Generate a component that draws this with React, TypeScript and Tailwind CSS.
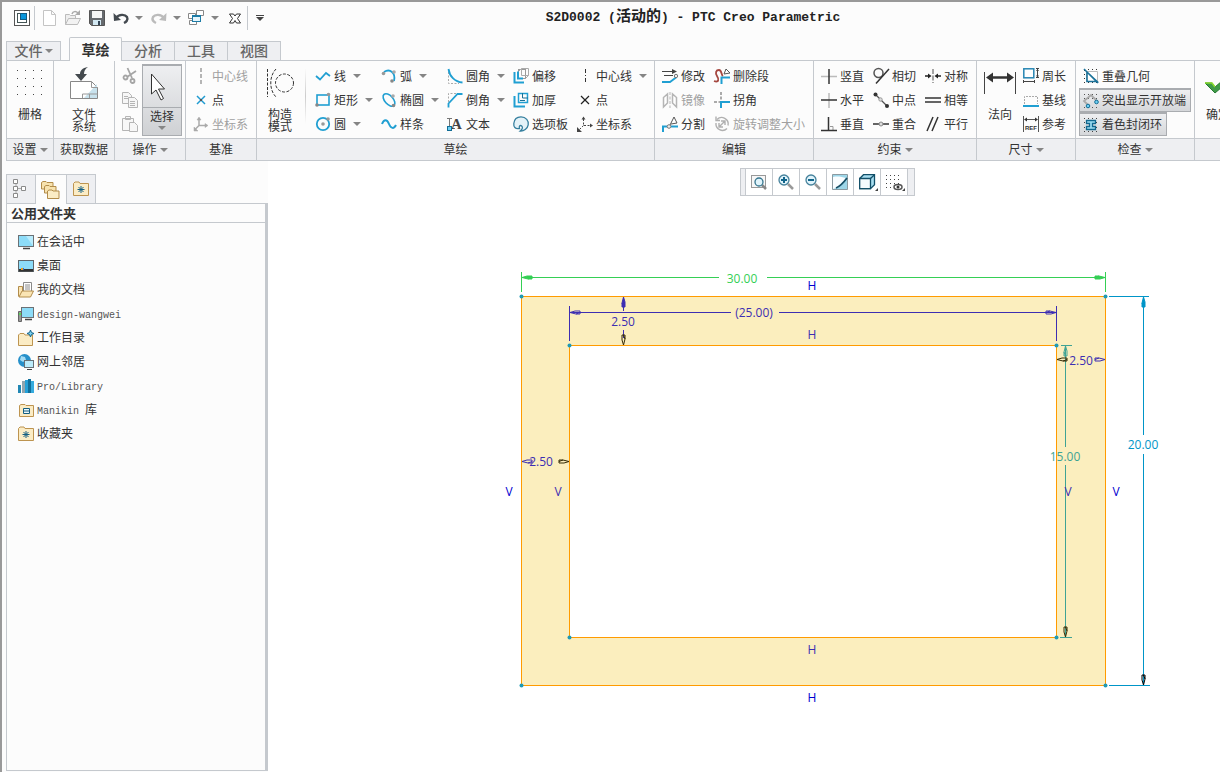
import type { ReactNode } from "react";

const ICONS: Record<string, ReactNode> = {
  app: (
    <>
      <rect x="0.5" y="0.5" width="15" height="15" fill="#fff" stroke="#555" />
      <rect x="3.5" y="3.5" width="9" height="9" fill="#fff" stroke="#455" />
      <rect x="6.5" y="3.5" width="6" height="6" fill="#0a96dc" stroke="#135c82" />
    </>
  ),
  newFile: <path d="M1.5.5h8l4 4v11h-12zM9.5.5v4h4" fill="#fff" stroke="#c4c4c4" />,
  open: (
    <>
      <path d="M.5 14.5v-10h4l1 1h5v3" fill="#eee" stroke="#bbb" />
      <path d="M.5 14.5l3-6h12l-3 6z" fill="#f2f2f2" stroke="#bbb" />
      <path d="M7 4c1-3 4-3 6-1" fill="none" stroke="#aaa" strokeWidth="1.5" />
      <path d="M15 0v5h-5z" fill="#aaa" />
    </>
  ),
  save: (
    <>
      <path d="M.5.5h15v15h-13l-2-2z" fill="#666a6e" stroke="#555" />
      <path d="M3 1h10v7H3z" fill="#f6f6f6" />
      <path d="M4 10h8v5H4z" fill="#d2e8f2" />
      <path d="M9 11h2v4H9z" fill="#345" />
    </>
  ),
  undo: (
    <>
      <path d="M3 8c3-4 9-4 11-1 1.500 3-1 5-3 6" fill="none" stroke="#444a50" strokeWidth="2.4" />
      <path d="M.5 3l.5 8 7-1z" fill="#444a50" />
    </>
  ),
  redo: (
    <>
      <path d="M13 8C10 4 4 4 2 7c-1.500 3 1 5 3 6" fill="none" stroke="#bbb" strokeWidth="2.4" />
      <path d="M15.5 3l-.5 8-7-1z" fill="#bbb" />
    </>
  ),
  windows: (
    <>
      <path d="M.5 3.500h7v5h-7zM1.500 10.500h7v4h-7zM8.500.5h7v5h-7z" fill="#fff" stroke="#888" />
      <rect x="4.500" y="5.500" width="8" height="6" fill="#e5f5fc" stroke="#1c7ba6" />
      <path d="M4 5h9v2H4z" fill="#1c7ba6" />
    </>
  ),
  close: <path d="M2.500 4h4l1.500 2 1.500-2h4l-3 4.500 3 4.500h-4l-1.500-2.500-1.500 2.500h-4l3-4.500z" fill="#fff" stroke="#333" />,
  cut: (
    <g fill="none" stroke="#a5a5a5" strokeWidth="1.8">
      <path d="M5.500 0l4.500 10M14 3L5 9" />
      <circle cx="3.500" cy="9.500" r="2" />
      <circle cx="10.500" cy="13" r="2" />
    </g>
  ),
  copy: (
    <g fill="#f7f7f7" stroke="#b5b5b5">
      <path d="M.5.5h6l3 3v8h-9zM2 4.500h4M2 6.500h4" />
      <path d="M6.500 5.500h6l3 3v7h-9zM8 9.500h5M8 11.500h5M8 13.500h5" />
    </g>
  ),
  paste: (
    <g fill="#f7f7f7" stroke="#b5b5b5">
      <path d="M.5 2.500h11v12H.5zM3.500.5h5v3h-5z" />
      <path d="M7.500 6.500h5l3 3v6h-8z" />
    </g>
  ),
  axisGray: <path d="M8 0v16" stroke="#b5b5b5" strokeWidth="2" strokeDasharray="4 2" fill="none" />,
  axis: <path d="M8.500 1v15" stroke="#333" strokeDasharray="4 2 1 2" fill="none" />,
  pointBlue: (
    <>
      <path d="M4 4l8 8M12 4l-8 8" stroke="#1f9bd1" strokeWidth="1.5" />
      <rect x="7" y="7" width="2" height="2" fill="#555" />
    </>
  ),
  point: (
    <>
      <path d="M4 4l8 8M12 4l-8 8" stroke="#222" strokeWidth="1.2" />
      <rect x="7" y="7" width="2" height="2" fill="#222" />
    </>
  ),
  csysGray: (
    <g stroke="#aaa" strokeWidth="1.5" fill="#aaa">
      <path d="M6 2v7.500h8M6 9.500l-4 4" fill="none" />
      <path d="M4 4L6 1l2 3zM12 7.500l3 2-3 2zM1 11v4h4z" strokeWidth=".5" />
    </g>
  ),
  csys: (
    <g stroke="#444" fill="#444">
      <path d="M6.500 3v6.500h7M6.500 9.500l-4 4" fill="none" strokeDasharray="2 1.500" />
      <path d="M4.500 3.500l2-3 2 3zM13 7.500l3 2-3 2zM0 11v5h5z" stroke="none" />
    </g>
  ),
  line: <path d="M1 8l4 3.500 6-6.500 4 3" fill="none" stroke="#209fd2" strokeWidth="1.800" />,
  rect: (
    <>
      <rect x="2" y="3" width="12" height="10" fill="none" stroke="#209fd2" strokeWidth="1.6" />
      <circle cx="13.500" cy="2.500" r="1.8" fill="#999" />
      <circle cx="2" cy="13" r="1.8" fill="#888" />
    </>
  ),
  circle: (
    <>
      <circle cx="8" cy="8" r="6.2" fill="none" stroke="#209fd2" strokeWidth="1.8" />
      <circle cx="8" cy="8" r="1.8" fill="#999" />
      <circle cx="13" cy="3" r="1.8" fill="#999" />
    </>
  ),
  arc: (
    <>
      <path d="M3 4c6-4 12 1 10 9" fill="none" stroke="#209fd2" strokeWidth="1.8" />
      <circle cx="2.500" cy="5.500" r="1.8" fill="#999" />
      <circle cx="13" cy="4" r="1.8" fill="#aaa" />
      <circle cx="11" cy="13" r="1.8" fill="#888" />
    </>
  ),
  ellipse: (
    <>
      <ellipse cx="8" cy="8" rx="7.500" ry="4.200" transform="rotate(48 8 8)" fill="none" stroke="#209fd2" strokeWidth="1.6" />
      <circle cx="12" cy="4" r="1.8" fill="#aaa" />
      <circle cx="12.500" cy="13.500" r="1.8" fill="#888" />
    </>
  ),
  spline: <path d="M1 8c2-5 5-5 7 0s5 5 7 1" fill="none" stroke="#209fd2" strokeWidth="2" />,
  fillet: (
    <>
      <path d="M1.500 4v11.500H12" fill="none" stroke="#aaa" strokeDasharray="2 1.500" />
      <path d="M1.500 1c1 7 6 13 14 13.500" fill="none" stroke="#209fd2" strokeWidth="1.8" />
    </>
  ),
  chamfer: (
    <>
      <path d="M1.500 10V1.500H9" fill="none" stroke="#aaa" strokeDasharray="2 1.500" />
      <path d="M1.500 15.500v-4l9-9.500h5" fill="none" stroke="#209fd2" strokeWidth="1.8" />
    </>
  ),
  text: (
    <>
      <path d="M2.500 2V11M0 2.500h5M4 12.500h4" fill="none" stroke="#777" />
      <text x="4" y="13" fontSize="15" fontWeight="700" fontFamily="Liberation Serif, serif" fill="#444">A</text>
      <rect x=".5" y="10.500" width="4" height="4" fill="#6fd0f3" stroke="#126d96" />
    </>
  ),
  offset: (
    <>
      <rect x="5.500" y="1.500" width="7" height="9" fill="none" stroke="#999" />
      <path d="M5.500 3.500l3-3h7v7l-3 3M8.500.5v7h7" fill="none" stroke="#aaa" />
      <path d="M1.500 4v10.500H11M5 3.500v7h5" fill="none" stroke="#209fd2" strokeWidth="2" />
    </>
  ),
  thicken: (
    <>
      <path d="M5.500 10.500V1.500h9v9z" fill="none" stroke="#209fd2" strokeWidth="1.5" />
      <path d="M1.500 4v10.500H12" fill="none" stroke="#209fd2" strokeWidth="2" />
      <path d="M9.500 1v5H15M7 8.500h5" fill="none" stroke="#1a6f95" />
    </>
  ),
  palette: (
    <path d="M8 .8c5 0 8 4 7.200 8-.7 4-4.500 6.500-8 6.200 2-1.500 3-3.500 1.500-5-1.700-1.400-3 .5-2.200 2.500C2 13.500.5 10.500.8 7.500 1.200 3.500 4 .8 8 .8z" fill="#e4f2f8" stroke="#357f9e" strokeWidth="1.3" />
  ),
  modify: (
    <>
      <path d="M0 3.500h12M2 7.500h9" stroke="#444" strokeWidth="1.2" fill="none" />
      <path d="M10 1l5 2.500-5 2.500z" fill="#444" />
      <path d="M0 14h8l6-4.500V6" fill="none" stroke="#209fd2" strokeWidth="1.8" />
      <circle cx="14" cy="8" r="1.7" fill="#eee" stroke="#777" />
    </>
  ),
  mirror: (
    <>
      <path d="M1.500 5.500l4-3.500v9l-4 4zM14.500 5.500l-4-3.500v9l4 4z" fill="#fff" stroke="#b5b5b5" strokeWidth="1.5" />
      <path d="M8 0v16" stroke="#b5b5b5" strokeDasharray="3 1.500" />
    </>
  ),
  divide: (
    <>
      <path d="M1 16v-5.500h4M9 10.500h7" fill="none" stroke="#209fd2" strokeWidth="2" />
      <path d="M8 9l4-8 3 6-6 1" fill="#fff" stroke="#555" />
      <circle cx="7" cy="10.500" r="1.8" fill="#eee" stroke="#777" />
    </>
  ),
  trim: (
    <>
      <path d="M0 13c5 2 5-2 3-5S2 2 5 2s2 5 4 6" fill="none" stroke="#a54740" strokeWidth="1.8" />
      <path d="M7.500 16V9.500H16" fill="none" stroke="#209fd2" strokeWidth="2" />
      <path d="M10 6l2-5 4 4z" fill="#fff" stroke="#555" />
    </>
  ),
  corner: (
    <>
      <path d="M7 0v8M0 10h6" fill="none" stroke="#aaa" strokeWidth="2" strokeDasharray="3 1.500" />
      <path d="M7 16v-6h9" fill="none" stroke="#209fd2" strokeWidth="2" />
    </>
  ),
  rotate: (
    <g fill="none" stroke="#b0b0b0" strokeWidth="1.4">
      <path d="M3 3.500a6.500 6.500 0 0 1 11 6M13 12.500A6.500 6.500 0 0 1 2 7" />
      <path d="M5.500 10.500l5-5M7 5h4v4M5 7v4h4M2 .5v4h4" />
    </g>
  ),
  vertical: (
    <>
      <path d="M0 8.500h16" stroke="#bbb" strokeWidth="1.5" />
      <path d="M8 1v15" stroke="#333" strokeWidth="1.5" />
    </>
  ),
  horizontal: (
    <>
      <path d="M8 1v15" stroke="#bbb" strokeWidth="1.5" />
      <path d="M0 8h16" stroke="#333" strokeWidth="1.5" />
    </>
  ),
  perpendicular: (
    <>
      <path d="M9 10.500h3v4" fill="none" stroke="#999" />
      <path d="M7.500 1v14M0 14.500h16" stroke="#333" strokeWidth="1.5" />
    </>
  ),
  tangent: (
    <>
      <circle cx="5.500" cy="5" r="4.500" fill="none" stroke="#555" strokeWidth="1.5" />
      <path d="M3 15.500L16 1" stroke="#333" strokeWidth="1.5" />
    </>
  ),
  midpoint: (
    <>
      <path d="M2 2l12 12" stroke="#555" strokeWidth="1.3" />
      <circle cx="2.500" cy="2.500" r="2" fill="#333" />
      <circle cx="14" cy="14" r="2" fill="#333" />
      <circle cx="7.500" cy="7.500" r="1.7" fill="#ddd" stroke="#999" />
    </>
  ),
  coincident: (
    <>
      <path d="M0 8h16" stroke="#333" strokeWidth="1.5" />
      <circle cx="8" cy="8" r="2" fill="#ddd" stroke="#888" />
    </>
  ),
  symmetric: (
    <>
      <path d="M8 1v14" stroke="#888" strokeWidth="1.5" strokeDasharray="5 1.500" />
      <path d="M0 8h5M16 8h-5" stroke="#222" strokeWidth="1.5" />
      <path d="M3 5.500L6.500 8 3 10.500zM13 5.500L9.500 8l3.500 2.500z" fill="#222" />
    </>
  ),
  equal: <path d="M0 6h16M0 10h16" stroke="#333" strokeWidth="1.5" />,
  parallel: <path d="M2 15L8 1M7 15l6-14" stroke="#333" strokeWidth="1.5" />,
  perimeter: (
    <>
      <rect x=".8" y=".8" width="10" height="9" fill="#fff" stroke="#2786b3" strokeWidth="1.5" />
      <path d="M14.500 1v8M13 .5h3M13 9.500h3M1 13.500h10M.5 12v3M11.500 12v3" stroke="#444" />
      <path d="M13 3l1.500-2L16 3zM13 7.500l1.500 2 1.500-2z" fill="#444" />
    </>
  ),
  baseline: (
    <>
      <path d="M1.500 12V4.500h13V12" fill="none" stroke="#aaa" strokeDasharray="2 1" />
      <path d="M0 14h16" stroke="#209fd2" strokeWidth="2" />
    </>
  ),
  reference: (
    <>
      <path d="M.5 0v16M15.500 0v16M2 3.500h12" stroke="#555" />
      <path d="M1 3.500l3-2v4zM15 3.500l-3-2v4z" fill="#333" />
      <text x="2" y="14" fontSize="6" fontWeight="700" fontFamily="Liberation Sans, sans-serif" fill="#333">REF</text>
    </>
  ),
  overlap: (
    <>
      <path d="M1 1.500h13M1 14.500h13M1.500 2v13" stroke="#333" strokeDasharray="1 3" />
      <path d="M3.500 3.500h11v10h-11z" fill="#fff" stroke="#bbb" />
      <path d="M4 4v9.500h10zM1 1l14 14" fill="none" stroke="#1b7299" strokeWidth="1.6" />
    </>
  ),
  openEnds: (
    <>
      <path d="M1 1.500h15M1 5.500h15M1 14.500h15" stroke="#555" strokeDasharray="1 3" />
      <path d="M5 12L1 8l7-6 6 6" fill="none" stroke="#aaa" strokeWidth="1.8" />
      <circle cx="5" cy="13" r="1.8" fill="#6fd0f3" stroke="#126d96" />
      <circle cx="13.500" cy="9" r="1.8" fill="#6fd0f3" stroke="#126d96" />
    </>
  ),
  shade: (
    <>
      <path d="M1 1.500h15M1 5.500h15M1 10.500h15M1 14.500h15" stroke="#444" strokeDasharray="1 3" />
      <path d="M3.500 3.500h9v3h-3v3h3v3h-9v-3h3v-3h-3z" fill="#9bdcf2" stroke="#12688f" strokeWidth="1.3" />
    </>
  ),
  tree: (
    <>
      <path d="M3 3v12M3 7.500h6" stroke="#aaa" />
      <path d="M.5-1.500h4v4h-4zM.5 5.500h4v4h-4zM.5 12.500h4v4h-4zM8.500 5.500h4v4h-4z" fill="#fff" stroke="#8a8a8a" />
    </>
  ),
  folders: (
    <g fill="#f7e2ae" stroke="#b28c4a">
      <path d="M-1.500 7V.5L0-.5h3l1 1h6V7z" />
      <path d="M1.500 11V4.500L3 3.500h3l1 1h6V11z" />
      <path d="M4.500 16.500V9L6 8h3l1 1h6v7.500z" fill="#fbecc5" />
    </g>
  ),
  favFolder: (
    <>
      <path d="M.5 14.500V2.500L2 1h4l1 1.500h8.500v12z" fill="#fbecc5" stroke="#bd9450" />
      <path d="M8 5v7M4.500 8.500h7M5.500 6l5 5M10.500 6l-5 5" stroke="#135f83" />
    </>
  ),
  session: (
    <>
      <rect x=".5" y="1.500" width="15" height="11" fill="#8ddcf8" stroke="#6b7175" />
      <path d="M5 14.500h7" stroke="#444" strokeWidth="1.5" />
      <path d="M15 2v10L8 2z" fill="#b9ecfd" />
    </>
  ),
  desktop: (
    <>
      <rect x=".5" y="2.500" width="15" height="11" fill="#8ddcf8" stroke="#5f666a" />
      <path d="M1 11h14v2.500H1z" fill="#333" />
      <path d="M3 10h2v2H3z" fill="#f0a21a" />
      <path d="M5 10h1v2H5z" fill="#2670dd" />
    </>
  ),
  documents: (
    <>
      <path d="M.5 14.500v-10h4v10" fill="#fae5b4" stroke="#b28c4a" />
      <path d="M5.500 10V.5h8V10M7 3h5M7 5h5M7 7h5" fill="#fff" stroke="#8a8a8a" />
      <path d="M1 15l3-6h11.500l-3 6z" fill="#fae5b4" stroke="#b28c4a" />
    </>
  ),
  computer: (
    <>
      <rect x="3.500" y="1.500" width="12" height="10" fill="#8ddcf8" stroke="#6b7175" />
      <path d="M7 13.500h7" stroke="#444" strokeWidth="1.5" />
      <path d="M.5 5.500h3v10h-3z" fill="#999" stroke="#666" />
      <path d="M1 7h2v2H1z" fill="#57d957" />
    </>
  ),
  workDir: (
    <>
      <path d="M.5 15.500V5L2 3.500h4L7 5h7.500v10.500z" fill="#fbecc5" stroke="#bd9450" />
      <path d="M12.500 0l1 2.500 2.500 1-2.500 1-1 2.500-1-2.500-2.500-1 2.500-1z" fill="#76cff0" stroke="#15658b" />
    </>
  ),
  network: (
    <>
      <circle cx="6.500" cy="6.500" r="6.500" fill="#2690ca" />
      <path d="M3 2l4 1 1 3-3 2-3-2zM7 8l3 1-2 3z" fill="#a5dcf3" />
      <rect x="6.500" y="6.500" width="9" height="7" fill="#bcecfb" stroke="#687177" />
      <path d="M9 15.500h5" stroke="#444" />
    </>
  ),
  library: (
    <>
      <path d="M0 7h3v8H0z" fill="#2187b4" />
      <path d="M4 3h3v12H4z" fill="#8fa5af" />
      <path d="M7 2h3v13H7z" fill="#25a0d7" />
      <path d="M10 1h3v14h-3z" fill="#126f9a" />
      <path d="M13 3h3v12h-3z" fill="#36abde" />
    </>
  ),
  manikin: (
    <>
      <path d="M1.500 14.500v-11L3 2.500h4l1 1h7.500v11z" fill="#fbecc5" stroke="#bd9450" />
      <path d="M5.500 6.500h6v5h-6zM5 9h7" fill="#eaf7fc" stroke="#135f83" />
    </>
  ),
  refit: (
    <>
      <rect x=".5" y="1.500" width="14" height="12" fill="#f7f7f7" stroke="#999" />
      <path d="M11 11l4 4" stroke="#888" strokeWidth="2.5" />
      <circle cx="8" cy="8" r="4" fill="#e1f4fb" stroke="#34758e" strokeWidth="1.3" />
    </>
  ),
  zoomIn: (
    <>
      <path d="M10 10l5 5" stroke="#999" strokeWidth="2.5" />
      <circle cx="6" cy="6" r="5" fill="#dff3fb" stroke="#46829c" strokeWidth="1.3" />
      <path d="M3 6h6M6 3v6" stroke="#11658b" strokeWidth="2" />
    </>
  ),
  zoomOut: (
    <>
      <path d="M10 10l5 5" stroke="#999" strokeWidth="2.5" />
      <circle cx="6" cy="6" r="5" fill="#dff3fb" stroke="#46829c" strokeWidth="1.3" />
      <path d="M3 6h6" stroke="#11658b" strokeWidth="2" />
    </>
  ),
  repaint: (
    <>
      <path d="M.5.5h15v15H.5z" fill="#9dd6e8" stroke="#8b9aa1" />
      <path d="M1 3c5-1 9 0 13 1l-7 9-6 2z" fill="#f9fdff" />
      <path d="M4 14c5-2 8-6 11-10" stroke="#174f66" strokeWidth="1.8" fill="none" />
    </>
  ),
  box: (
    <>
      <path d="M.7 4.500L4.500.7h11v10l-4 4H.7z" fill="#a8def0" stroke="#124f68" strokeWidth="1.3" />
      <path d="M.7 4.500h10.800v10.200H.7z" fill="#f4fbfe" stroke="#124f68" strokeWidth="1.3" />
      <path d="M11.500 4.500l4-3.800" stroke="#124f68" strokeWidth="1.3" />
    </>
  ),
  displayFilter: (
    <>
      <path d="M0 1.500h14M0 5.500h14M0 9.500h14M0 13.500h6" stroke="#444" strokeDasharray="1 3" />
      <ellipse cx="12" cy="13" rx="4" ry="2.500" fill="#fff" stroke="#555" strokeWidth="1.5" />
      <circle cx="12" cy="13" r="1.500" fill="#333" />
    </>
  ),
};

function Icon({ name, size = 16 }: { name: string; size?: number }) {
  return (
    <svg width={size} height={size} viewBox="0 0 16 16" className="shrink-0 overflow-visible" aria-hidden>
      {ICONS[name]}
    </svg>
  );
}

function Caret({ dark }: { dark?: boolean }) {
  return (
    <svg width="8" height="4" viewBox="0 0 8 4" className="shrink-0" aria-hidden>
      <path d="M0 0h8L4 4z" fill={dark ? "#444" : "#858585"} />
    </svg>
  );
}

interface ToolProps {
  icon: string;
  label: string;
  menu?: boolean;
  disabled?: boolean;
}

function Tool({ icon, label, menu, disabled }: ToolProps) {
  return (
    <button
      type="button"
      disabled={disabled}
      className={`flex h-6 items-center gap-[3px] whitespace-nowrap ${disabled ? "text-[#a0a0a0]" : "text-[#333]"}`}
    >
      <Icon name={icon} />
      <span className="pt-px">{label}</span>
      {menu && (
        <span className="ml-1">
          <Caret />
        </span>
      )}
    </button>
  );
}

interface GroupProps {
  title: string;
  menu?: boolean;
  width: string;
  children: ReactNode;
}

function Group({ title, menu, width, children }: GroupProps) {
  return (
    <section aria-label={title} className={`flex flex-col border-l border-[#c5c9ce] ${width}`}>
      <div className="flex h-[77px] overflow-hidden pt-[3px]">{children}</div>
      <div className="flex h-[22px] items-center justify-center gap-[3px] border-t border-[#c5c9ce] bg-[#eeeff2] whitespace-nowrap">
        {title}
        {menu && <Caret />}
      </div>
    </section>
  );
}

const SKETCH: ToolProps[][] = [
  [
    { icon: "line", label: "线", menu: true },
    { icon: "rect", label: "矩形", menu: true },
    { icon: "circle", label: "圆", menu: true },
  ],
  [
    { icon: "arc", label: "弧", menu: true },
    { icon: "ellipse", label: "椭圆", menu: true },
    { icon: "spline", label: "样条" },
  ],
  [
    { icon: "fillet", label: "圆角", menu: true },
    { icon: "chamfer", label: "倒角", menu: true },
    { icon: "text", label: "文本" },
  ],
  [
    { icon: "offset", label: "偏移" },
    { icon: "thicken", label: "加厚" },
    { icon: "palette", label: "选项板" },
  ],
];

const SKETCH_DATUM: ToolProps[] = [
  { icon: "axis", label: "中心线", menu: true },
  { icon: "point", label: "点" },
  { icon: "csys", label: "坐标系" },
];

const EDIT: ToolProps[][] = [
  [
    { icon: "modify", label: "修改" },
    { icon: "mirror", label: "镜像", disabled: true },
    { icon: "divide", label: "分割" },
  ],
  [
    { icon: "trim", label: "删除段" },
    { icon: "corner", label: "拐角" },
    { icon: "rotate", label: "旋转调整大小", disabled: true },
  ],
];

const CONSTRAIN: ToolProps[][] = [
  [
    { icon: "vertical", label: "竖直" },
    { icon: "horizontal", label: "水平" },
    { icon: "perpendicular", label: "垂直" },
  ],
  [
    { icon: "tangent", label: "相切" },
    { icon: "midpoint", label: "中点" },
    { icon: "coincident", label: "重合" },
  ],
  [
    { icon: "symmetric", label: "对称" },
    { icon: "equal", label: "相等" },
    { icon: "parallel", label: "平行" },
  ],
];

function Column({ tools, width = "" }: { tools: ToolProps[]; width?: string }) {
  return (
    <div className={`flex shrink-0 flex-col items-start ${width}`}>
      {tools.map((t) => (
        <Tool key={t.label} {...t} />
      ))}
    </div>
  );
}

function Divider() {
  return <span className="h-6 w-px bg-[#c5c9ce]" />;
}

function TitleBar() {
  return (
    <header className="flex h-[35px] items-center pb-[3px]">
      <div className="flex h-8 items-center pl-3">
        <button type="button" aria-label="应用程序"><Icon name="app" /></button>
        <span className="mr-[7px] ml-1 flex"><Divider /></span>
        <button type="button" aria-label="新建" className="mr-[7px]"><Icon name="newFile" /></button>
        <button type="button" aria-label="打开" className="mr-2"><Icon name="open" /></button>
        <button type="button" aria-label="保存" className="mr-2"><Icon name="save" /></button>
        <button type="button" aria-label="撤消" className="mr-2 flex items-center gap-1.5"><Icon name="undo" /><Caret /></button>
        <button type="button" aria-label="重做" className="mr-[7px] flex items-center gap-1.5"><Icon name="redo" /><Caret /></button>
        <button type="button" aria-label="窗口" className="mr-2 flex items-center gap-[7px]"><Icon name="windows" /><Caret /></button>
        <button type="button" aria-label="关闭"><Icon name="close" /></button>
        <span className="mr-2 ml-1 flex"><Divider /></span>
        <button type="button" aria-label="自定义" className="flex flex-col items-center gap-px">
          <span className="h-px w-2 bg-[#444]" />
          <Caret dark />
        </button>
      </div>
      <h1 className="flex-1 pr-[98px] text-center font-['Liberation_Mono','Noto_Sans_CJK_SC',monospace] text-[13px] leading-5 font-bold whitespace-nowrap text-[#222]">
        S2D0002 (<span className="text-[15px]">活动的</span>) - PTC Creo Parametric
      </h1>
    </header>
  );
}

function RibbonTabs() {
  return (
    <nav className="ml-1 flex h-[23px] items-end text-sm font-medium text-[#666]">
      <button type="button" className="flex h-[19px] w-[55px] items-center justify-center gap-0.5 border border-b-0 border-[#c5c9ce] bg-[#eeeff2]">
        文件
        <Caret />
      </button>
      <button type="button" className="relative -mb-px ml-2 flex h-6 w-[53px] items-center justify-center rounded-t-xs border border-b-0 border-[#c5c9ce] bg-[#fcfcfc] font-bold text-[#333]">
        草绘
      </button>
      {["分析", "工具", "视图"].map((t) => (
        <button key={t} type="button" className="flex h-[19px] w-[53px] items-center justify-center border-t border-r border-[#c5c9ce] bg-[#eeeff2]">
          {t}
        </button>
      ))}
    </nav>
  );
}

function BigTool({ label, width, children }: { label: string; width: string; children: ReactNode }) {
  return (
    <button type="button" className={`flex shrink-0 flex-col items-center justify-start ${width}`}>
      <span className="flex h-[38px] items-center justify-center">{children}</span>
      <span className="pt-[7px] leading-3 whitespace-pre-line">{label}</span>
    </button>
  );
}

function Ribbon() {
  return (
    <div className="ml-1 flex overflow-hidden border-y border-[#c5c9ce] bg-[#fcfcfc] text-xs text-[#333]">
      <Group title="设置" menu width="w-[47px] shrink-0">
        <BigTool label="栅格" width="w-full">
          <svg width="28" height="28" viewBox="0 0 28 28" aria-hidden>
            <path d="M1 1.500h26M1 9.500h26M1 17.500h26M1 25.500h26" stroke="#444" strokeDasharray="1 7" />
          </svg>
        </BigTool>
      </Group>
      <Group title="获取数据" width="w-[61px] shrink-0">
        <BigTool label={"文件\n系统"} width="w-full">
          <svg width="28" height="34" viewBox="0 0 28 34" aria-hidden>
            <path d="M.5 15.500h21l6 6v11H.5z" fill="#fff" stroke="#888" />
            <path d="M14 32l13-14v14z" fill="#c8e2ed" />
            <path d="M21.500 15.500v6h6M12.500 32v-4h15M19.500 28v4" fill="none" stroke="#999" />
            <path d="M18 1c-6 1-8 4-8 7H5l6 7 6-7h-3c0-3 1-5 4-7z" fill="#444a4e" />
          </svg>
        </BigTool>
      </Group>
      <Group title="操作" menu width="w-[71px] shrink-0">
        <div className="flex w-[27px] flex-col pl-[7px]">
          {[
            { name: "cut", label: "剪切" },
            { name: "copy", label: "复制" },
            { name: "paste", label: "粘贴" },
          ].map((b) => (
            <button key={b.name} type="button" disabled aria-label={b.label} className="flex h-6 items-center">
              <Icon name={b.name} />
            </button>
          ))}
        </div>
        <button type="button" className="flex h-[72px] w-10 flex-col items-center border border-t-2 border-[#a9acb0] bg-gradient-to-b from-[#eeeff1] to-[#cfd1d4]">
          <span className="flex h-[42px] w-full items-center justify-center border-b border-[#a9acb0]">
            <svg width="16" height="28" viewBox="0 0 16 28" className="mr-2" aria-hidden>
              <path d="M1.500 1v20l4.500-4 5 10 2.500-1.500-5-9.500h6z" fill="#fff" stroke="#333" />
            </svg>
          </span>
          <span className="leading-[18px]">选择</span>
          <Caret />
        </button>
      </Group>
      <Group title="基准" width="w-[71px] shrink-0">
        <div className="pl-[7px]">
          <Column
            tools={[
              { icon: "axisGray", label: "中心线", disabled: true },
              { icon: "pointBlue", label: "点" },
              { icon: "csysGray", label: "坐标系", disabled: true },
            ]}
          />
        </div>
      </Group>
      <Group title="草绘" width="w-[398px] shrink-0">
        <BigTool label={"构造\n模式"} width="w-[46px]">
          <svg width="28" height="30" viewBox="0 0 28 30" aria-hidden>
            <g fill="none" stroke="#333" strokeDasharray="3 1.500">
              <path d="M1.500 1v28M10 1C3 8 3 22 10 29" />
              <circle cx="18.500" cy="15" r="9" />
            </g>
          </svg>
        </BigTool>
        <span className="mt-1 mr-[9px] ml-0.5 h-14 w-px bg-gradient-to-b from-transparent via-[#ccc] to-transparent" />
        {SKETCH.map((col, i) => (
          <Column key={i} tools={col} width={i === 3 ? "w-16" : "w-[66px]"} />
        ))}
        <Column tools={SKETCH_DATUM} />
      </Group>
      <Group title="编辑" width="w-[159px] shrink-0">
        <div className="flex pl-[7px]">
          <Column tools={EDIT[0]} width="w-[52px]" />
          <Column tools={EDIT[1]} />
        </div>
      </Group>
      <Group title="约束" menu width="w-[163px] shrink-0">
        <div className="flex pl-[7px]">
          {CONSTRAIN.map((col, i) => (
            <Column key={i} tools={col} width="w-[52px]" />
          ))}
        </div>
      </Group>
      <Group title="尺寸" menu width="w-[99px] shrink-0">
        <BigTool label="法向" width="w-[46px]">
          <svg width="32" height="24" viewBox="0 0 32 24" aria-hidden>
            <path d="M.5 1v22M31.500 1v22" stroke="#444" />
            <path d="M6 6.500h20" stroke="#333" strokeWidth="2.500" />
            <path d="M2 6.500l7-5v10zM30 6.500l-7-5v10z" fill="#333" />
          </svg>
        </BigTool>
        <Column
          tools={[
            { icon: "perimeter", label: "周长" },
            { icon: "baseline", label: "基线" },
            { icon: "reference", label: "参考" },
          ]}
        />
      </Group>
      <Group title="检查" menu width="w-[119px] shrink-0">
        <div className="flex flex-col items-start pl-[3px]">
          <span className="pl-1">
            <Tool icon="overlap" label="重叠几何" />
          </span>
          {[
            { icon: "openEnds", label: "突出显示开放端" },
            { icon: "shade", label: "着色封闭环" },
          ].map((t) => (
            <span key={t.label} className="flex h-6 items-center border border-t-2 border-[#a9acb0] bg-gradient-to-b from-[#eeeff1] to-[#d5d7da] pr-1 pl-[3px]">
              <Tool {...t} />
            </span>
          ))}
        </div>
      </Group>
      <Group title="" width="min-w-[60px] flex-1">
        <button type="button" className="flex shrink-0 flex-col items-start pl-[9px]">
          <span className="flex h-[45px] items-center">
            <svg width="26" height="14" viewBox="0 0 26 14" aria-hidden>
              <path d="M1 3h7l3 4 7-6h7L11 13z" fill="#3f9a47" stroke="#267a32" />
              <path d="M1 3h7l3 4" fill="none" stroke="#8bdc2e" strokeWidth="1.5" />
            </svg>
          </span>
          <span className="pl-0.5 leading-3">确定</span>
        </button>
      </Group>
    </div>
  );
}

const FOLDERS = [
  { icon: "session", label: "在会话中" },
  { icon: "desktop", label: "桌面" },
  { icon: "documents", label: "我的文档" },
  { icon: "computer", label: "design-wangwei" },
  { icon: "workDir", label: "工作目录" },
  { icon: "network", label: "网上邻居" },
  { icon: "library", label: "Pro/Library" },
  { icon: "manikin", label: "Manikin 库" },
  { icon: "favFolder", label: "收藏夹" },
];

function FolderLabel({ label }: { label: string }) {
  // latin runs use a mono face so that they keep half-width cells
  const [, latin, rest] = label.match(/^([\x20-\x7e]*)(.*)$/) ?? ["", "", label];
  return (
    <span className="whitespace-pre">
      {latin && <span className="font-['Liberation_Mono',monospace] text-[10px] text-[#555]">{latin}</span>}
      {rest}
    </span>
  );
}

function Sidebar() {
  return (
    <aside className="flex w-[266px] shrink-0 flex-col bg-[#fcfcfc] pb-px pl-1">
      <div className="flex h-[42px] items-end">
        {["tree", "folders", "favFolder"].map((name, i) => (
          <button
            key={name}
            type="button"
            aria-label={["模型树", "文件夹浏览器", "收藏夹"][i]}
            className={`flex w-[30px] items-center justify-center border border-b-0 border-[#c5c9ce] ${
              i === 1 ? "relative -mb-px h-[30px] border-x-0 bg-[#fcfcfc]" : "h-[29px] bg-[#eeeff2]"
            }`}
          >
            <Icon name={name} />
          </button>
        ))}
      </div>
      <div className="flex-1 border border-r-[3px] border-[#c5c9ce] text-xs text-[#333]">
        <h2 className="flex h-[19px] items-center border-b border-[#c5c9ce] pt-0.5 pl-1 text-[13px] font-bold">公用文件夹</h2>
        <ul className="pt-[7px] pl-[11px]">
          {FOLDERS.map((f) => (
            <li key={f.label}>
              <button type="button" className="flex h-6 items-center gap-[3px]">
                <Icon name={f.icon} />
                <FolderLabel label={f.label} />
              </button>
            </li>
          ))}
        </ul>
      </div>
    </aside>
  );
}

const VIEW_TOOLS = [
  { name: "refit", label: "重新调整" },
  { name: "zoomIn", label: "放大" },
  { name: "zoomOut", label: "缩小" },
  { name: "repaint", label: "重画" },
  { name: "box", label: "显示样式", more: true },
  { name: "displayFilter", label: "草绘器显示过滤器", more: true },
];

function ViewToolbar() {
  return (
    <div className="flex h-7 w-[175px] border border-[#c5c9ce] bg-[#eeeff2]">
      <span className="w-1 shrink-0" />
      {VIEW_TOOLS.map((t) => (
        <button
          key={t.name}
          type="button"
          aria-label={t.label}
          className="flex w-[27px] shrink-0 items-center justify-center border-l border-[#c5c9ce] bg-white"
        >
          <Icon name={t.name} />
          {t.more && (
            <svg width="3" height="3" viewBox="0 0 3 3" className="-mr-[3px] mb-1 self-end" aria-hidden>
              <path d="M3 0v3H0z" fill="#444" />
            </svg>
          )}
        </button>
      ))}
      <span className="flex-1 border-l border-[#c5c9ce]" />
    </div>
  );
}

const GREEN = "#35cf55";
const PURPLE = "#3d2eb2";
const TEAL = "#3fa394";
const CYAN = "#0095c8";
const DARK = "#352a05";
const BLUE = "#0000d0";

// tip of the arrow is at x, y; angle 0 points left
function Arrow({ x, y, angle, color, filled }: { x: number; y: number; angle: number; color: string; filled?: boolean }) {
  return (
    <path
      d="M0 0L5-1.500H10V1.500H6zM6 1.500L10 0"
      transform={`translate(${x} ${y}) rotate(${angle})`}
      fill={filled ? color : "none"}
      stroke={color}
    />
  );
}

const LINES = [
  { color: GREEN, d: "M521.5 272v20M1105.5 272v20M522 277.5H719M767 277.5H1105" },
  { color: PURPLE, d: "M569.5 306v35M1056.5 306v35M570 312.5H731M779 312.5H1056M623.5 297v14M623.5 330v8" },
  { color: TEAL, d: "M1065.5 346V447M1065.5 465V637M1061 345.5h11M1060 637.5h12" },
  { color: CYAN, d: "M1143.5 297V435M1143.5 454V685M1109 296.5h40M1109 685.5h41" },
];

const DIMS = [
  { x: 742, y: 283, t: "30.00", c: GREEN },
  { x: 754, y: 317, t: "(25.00)", c: PURPLE },
  { x: 623, y: 326, t: "2.50", c: PURPLE },
  { x: 1081, y: 365, t: "2.50", c: PURPLE },
  { x: 541, y: 466, t: "2.50", c: PURPLE },
  { x: 1065, y: 461, t: "15.00", c: TEAL },
  { x: 1143, y: 449, t: "20.00", c: CYAN },
  { x: 812, y: 290, t: "H", c: BLUE },
  { x: 812, y: 339, t: "H", c: PURPLE },
  { x: 812, y: 654, t: "H", c: PURPLE },
  { x: 812, y: 702, t: "H", c: BLUE },
  { x: 509, y: 496, t: "V", c: BLUE },
  { x: 558, y: 496, t: "V", c: PURPLE },
  { x: 1068, y: 496, t: "V", c: PURPLE },
  { x: 1116, y: 496, t: "V", c: BLUE },
];

const VERTICES = [
  [521, 296],
  [1105, 296],
  [521, 685],
  [1105, 685],
  [569, 345],
  [1056, 345],
  [569, 637],
  [1056, 637],
];

function SketchView() {
  return (
    <svg width="952" height="570" viewBox="268 196 952 570" className="shrink-0" role="img" aria-label="草绘">
      <path d="M521.5 296.5H1105.5V685.5H521.5zM569.5 345.5V637.5H1056.5V345.5z" fill="#fbeebe" stroke="#ff9b00" />
      {LINES.map((l) => (
        <path key={l.color} d={l.d} fill="none" stroke={l.color} />
      ))}
      <Arrow x={522} y={277.5} angle={0} color={GREEN} filled />
      <Arrow x={1105} y={277.5} angle={180} color={GREEN} filled />
      <Arrow x={570} y={312.5} angle={0} color={PURPLE} />
      <Arrow x={1056} y={312.5} angle={180} color={PURPLE} />
      <Arrow x={623.5} y={297} angle={90} color={PURPLE} filled />
      <Arrow x={623.5} y={345} angle={-90} color={DARK} />
      <Arrow x={1057} y={359.5} angle={0} color={DARK} />
      <Arrow x={1105} y={359.5} angle={180} color={PURPLE} />
      <Arrow x={522} y={461.5} angle={0} color={PURPLE} />
      <Arrow x={569} y={461.5} angle={180} color={DARK} />
      <Arrow x={1065.5} y={346} angle={90} color={TEAL} />
      <Arrow x={1065.5} y={637} angle={-90} color={DARK} />
      <Arrow x={1143.5} y={297} angle={90} color={CYAN} filled />
      <Arrow x={1143.5} y={685} angle={-90} color="#000" />
      {VERTICES.map(([x, y]) => (
        <circle key={`${x}-${y}`} cx={x + 0.5} cy={y + 0.5} r="2" fill="#1f9ab5" />
      ))}
      <g fontFamily="'Open Sans', 'Noto Sans', sans-serif" fontSize="12" textAnchor="middle">
        {DIMS.map((d) => (
          <text key={`${d.x}-${d.y}`} x={d.x} y={d.y} fill={d.c}>
            {d.t}
          </text>
        ))}
      </g>
    </svg>
  );
}

export default function App() {
  return (
    <div className="flex min-h-screen flex-col overflow-hidden border-t-2 border-l-2 border-[#999] bg-[#fcfcfc] font-['Liberation_Sans','Noto_Sans_CJK_SC',sans-serif]">
      <TitleBar />
      <RibbonTabs />
      <Ribbon />
      <div className="flex flex-1">
        <Sidebar />
        <main className="flex min-w-0 flex-1 flex-col overflow-hidden bg-white pt-[7px]">
          <div className="pl-[472px]">
            <ViewToolbar />
          </div>
          <SketchView />
        </main>
      </div>
    </div>
  );
}
